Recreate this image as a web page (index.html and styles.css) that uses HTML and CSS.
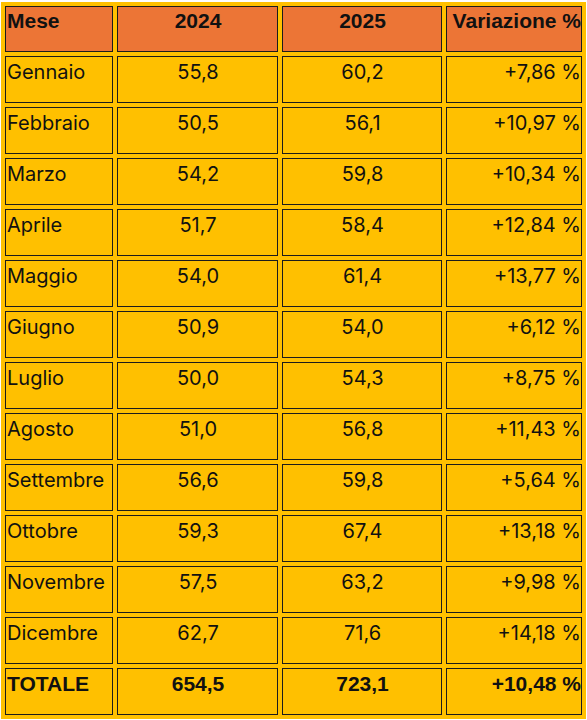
FILE: index.html
```html
<!DOCTYPE html>
<html lang="it">
<head>
<meta charset="utf-8">
<title>Variazione mensile</title>
<link rel="stylesheet" href="styles.css">
</head>
<body>
<table class="tbl">
  <thead>
    <tr class="head">
      <th class="l">Mese</th>
      <th class="c">2024</th>
      <th class="c">2025</th>
      <th class="r">Variazione %</th>
    </tr>
  </thead>
  <tbody>
    <tr><td class="l">Gennaio</td><td class="c">55,8</td><td class="c">60,2</td><td class="r">+7,86 %</td></tr>
    <tr><td class="l">Febbraio</td><td class="c">50,5</td><td class="c">56,1</td><td class="r">+10,97 %</td></tr>
    <tr><td class="l">Marzo</td><td class="c">54,2</td><td class="c">59,8</td><td class="r">+10,34 %</td></tr>
    <tr><td class="l">Aprile</td><td class="c">51,7</td><td class="c">58,4</td><td class="r">+12,84 %</td></tr>
    <tr><td class="l">Maggio</td><td class="c">54,0</td><td class="c">61,4</td><td class="r">+13,77 %</td></tr>
    <tr><td class="l">Giugno</td><td class="c">50,9</td><td class="c">54,0</td><td class="r">+6,12 %</td></tr>
    <tr><td class="l">Luglio</td><td class="c">50,0</td><td class="c">54,3</td><td class="r">+8,75 %</td></tr>
    <tr><td class="l">Agosto</td><td class="c">51,0</td><td class="c">56,8</td><td class="r">+11,43 %</td></tr>
    <tr><td class="l">Settembre</td><td class="c">56,6</td><td class="c">59,8</td><td class="r">+5,64 %</td></tr>
    <tr><td class="l">Ottobre</td><td class="c">59,3</td><td class="c">67,4</td><td class="r">+13,18 %</td></tr>
    <tr><td class="l">Novembre</td><td class="c">57,5</td><td class="c">63,2</td><td class="r">+9,98 %</td></tr>
    <tr><td class="l">Dicembre</td><td class="c">62,7</td><td class="c">71,6</td><td class="r">+14,18 %</td></tr>
    <tr class="total"><td class="l">TOTALE</td><td class="c">654,5</td><td class="c">723,1</td><td class="r">+10,48 %</td></tr>
  </tbody>
</table>
</body>
</html>
```

FILE: styles.css
```css
html, body {
  margin: 0;
  padding: 0;
  background: #ffffff;
}
.tbl {
  margin: 2px 0 0 1px;
  width: 584px;
  border-collapse: separate;
  border-spacing: 4px;
  background: #ffc000;
  table-layout: fixed;
}
.tbl th, .tbl td {
  border: 1px solid #1c1c1c;
  vertical-align: top;
  padding: 3px 0 0 1px;
  height: 47px;
  box-sizing: border-box;
  color: #111;
  font-family: Inter, "Liberation Sans", sans-serif;
  font-size: 20px;
  font-weight: 400;
  line-height: 24px;
  white-space: nowrap;
}
.tbl th:nth-child(1) { width: 108px; }
.tbl th:nth-child(2) { width: 161px; }
.tbl th:nth-child(3) { width: 160px; }
.tbl th:nth-child(4) { width: 136px; }
.head th {
  background: #ec7536;
  height: 46px;
  font-family: "Liberation Sans", Arial, sans-serif;
  font-weight: 700;
  font-size: 21px;
  padding-top: 2px;
}
.total td {
  font-family: "Liberation Sans", Arial, sans-serif;
  font-weight: 700;
  font-size: 21px;
}
.l { text-align: left; }
.c { text-align: center; }
.r { text-align: right; padding-right: 1px; }
```
